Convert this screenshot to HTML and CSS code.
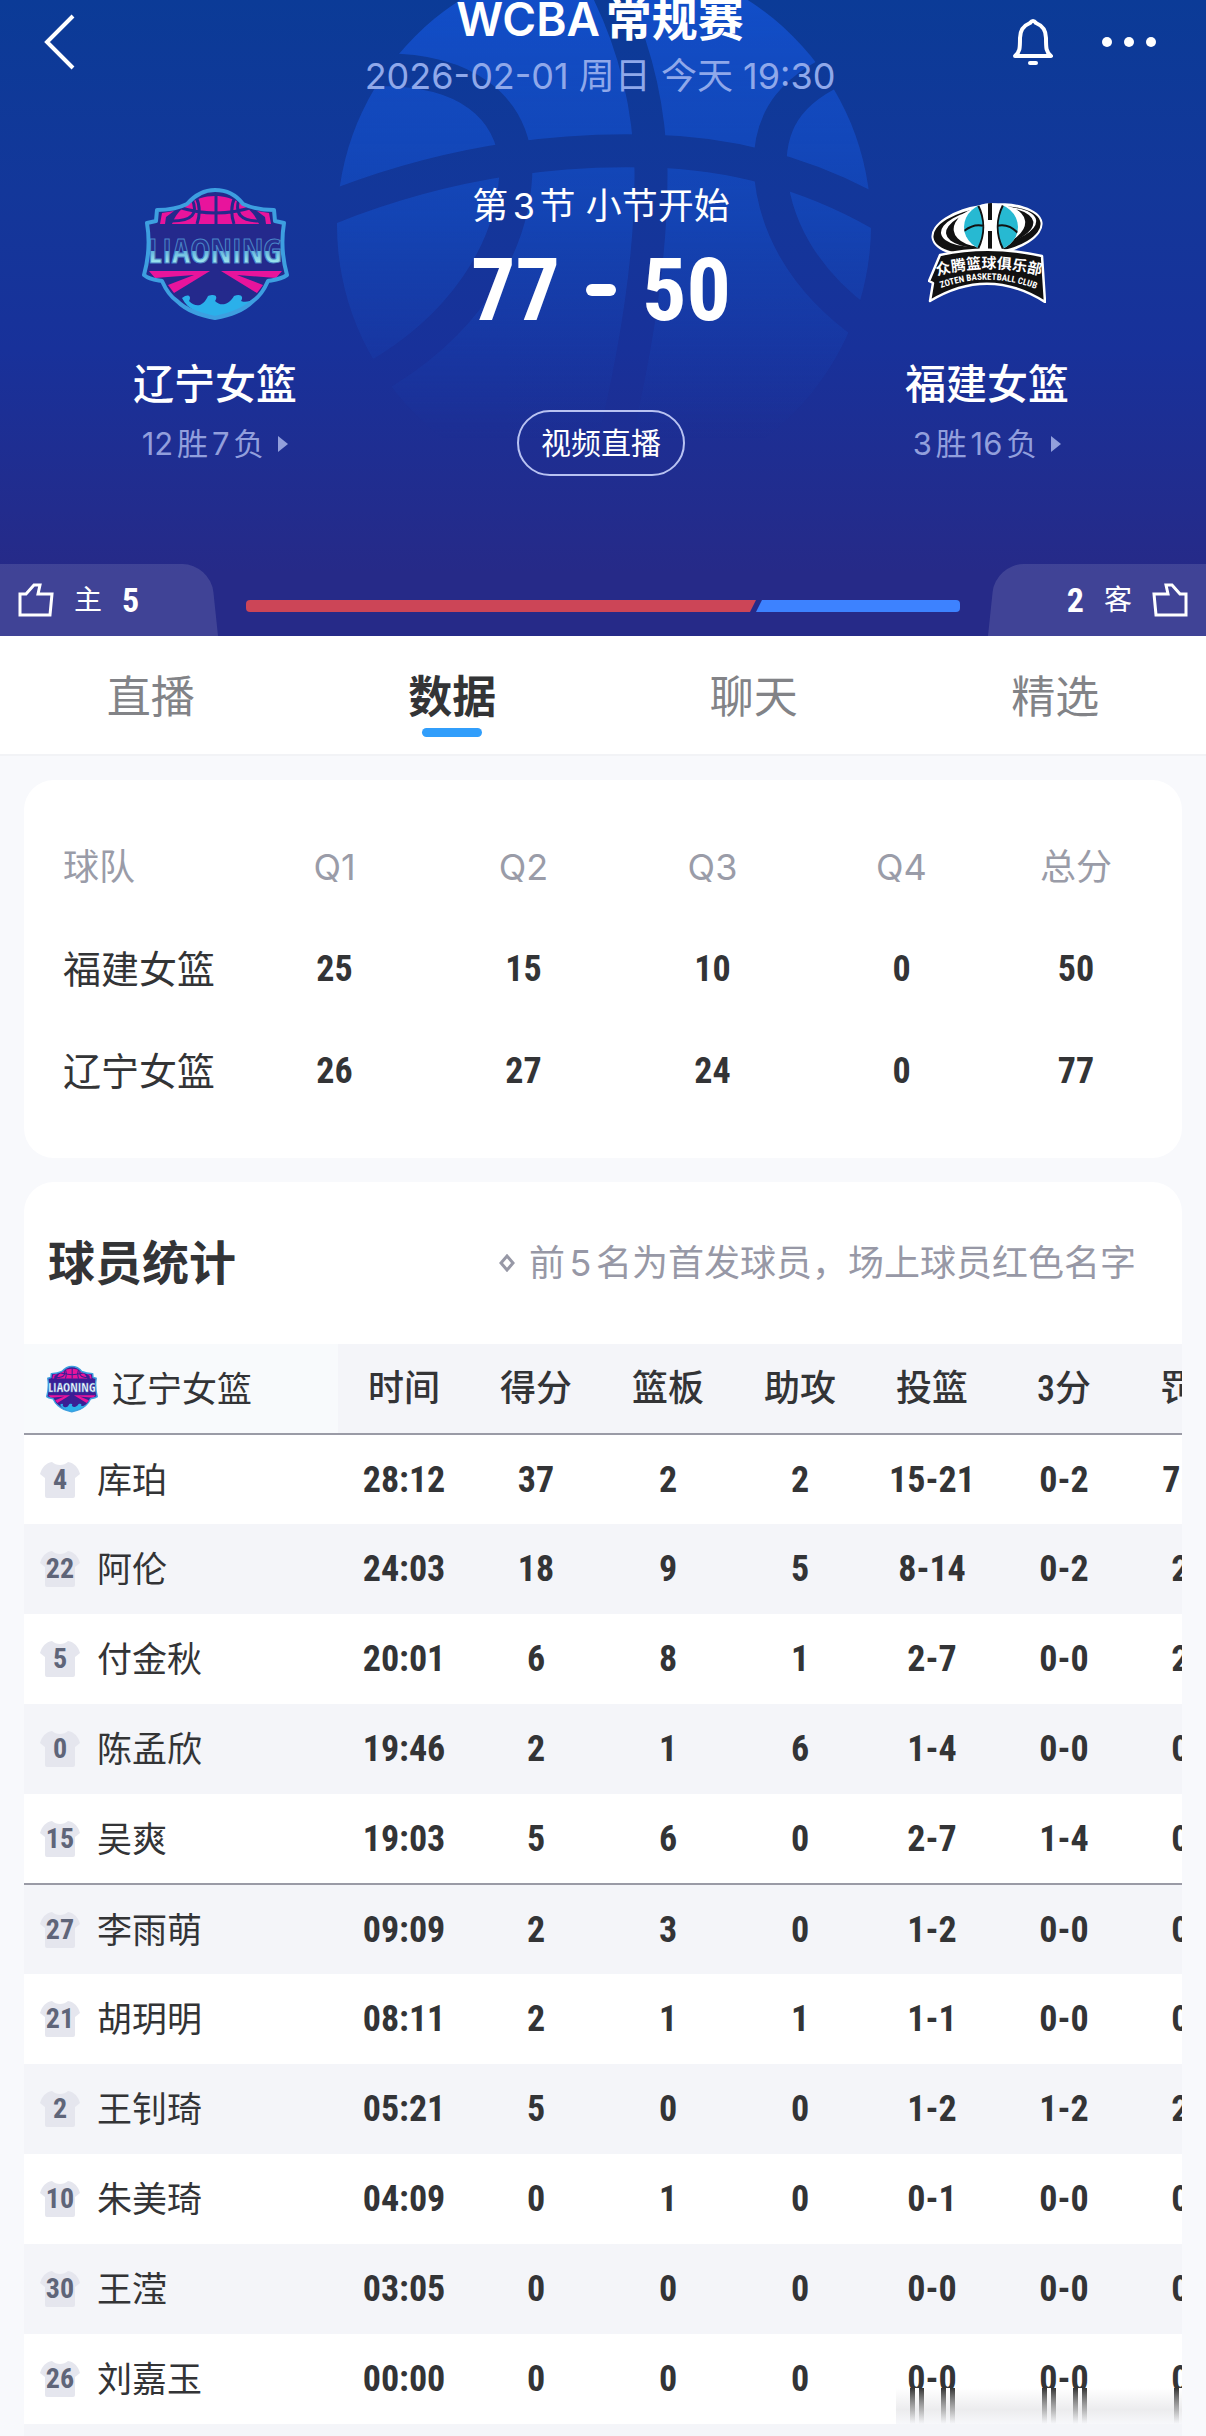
FILE: index.html
```html
<!DOCTYPE html>
<html lang="zh-CN">
<head>
<meta charset="utf-8">
<meta name="viewport" content="width=device-width, initial-scale=1">
<title>WCBA常规赛 辽宁女篮 77-50 福建女篮</title>
<link rel="stylesheet" href="styles.css">
</head>
<body>

<svg class="sprite" aria-hidden="true">
  <linearGradient id="wordHome" x1="0" y1="0" x2="0" y2="1">
    <stop offset="0.52" stop-color="#26308f"/>
    <stop offset="0.52" stop-color="#62b4dd"/>
    <stop offset="0.8" stop-color="#a5ecf0"/>
  </linearGradient>
  <symbol id="badge-liaoning" viewBox="0 0 147 133">
    <path class="badge-body" d="M73 3C85 3 95 9 101 17C112 22 122 23 132 23L133 34L142 36C139 54 140 70 145 88C138 93 131 93 126 94C122 103 117 110 111 114C101 124 88 128 73 131C58 128 45 124 35 114C29 110 24 103 20 94C15 93 8 93 2 88C7 70 8 54 5 36L14 34L15 23C25 23 35 22 45 17C52 9 61 3 73 3Z"/>
    <g fill="#e8149c">
      <path d="M30 37C35 22 52 9 73 9C94 9 111 22 117 37Z"/>
      <path d="M18 37L20 26L32 24L24 30L23 37ZM129 37L127 26L115 24L123 30L124 37Z"/>
      <path d="M7 84H68L32 106L26 98L52 88L13 91Z"/>
      <path d="M140 84H79L115 106L121 98L95 88L134 91Z"/>
    </g>
    <g class="badge-seams" fill="none" stroke-width="3">
      <path d="M74 8V37M36 20Q74 32 111 20M54 10Q60 22 55 37M93 10Q87 22 92 37M50 12Q60 34 30 34M97 12Q90 34 117 34"/>
    </g>
    <text class="badge-word" x="73" y="76" text-anchor="middle">LIAONING</text>
    <path class="badge-tower" d="M74 79L78 84V106H69V84Z"/>
    <path d="M40 111C46 106 50 109 47 114C55 122 62 118 66 109C74 106 76 110 73 114C80 121 88 116 92 109C99 106 102 110 99 114C104 116 108 114 112 112C102 124 88 127 73 131C58 127 46 123 40 111Z" fill="#2bb0ea"/>
    <path d="M73 3C85 3 95 9 101 17C112 22 122 23 132 23L133 34L142 36C139 54 140 70 145 88C138 93 131 93 126 94C122 103 117 110 111 114C101 124 88 128 73 131C58 128 45 124 35 114C29 110 24 103 20 94C15 93 8 93 2 88C7 70 8 54 5 36L14 34L15 23C25 23 35 22 45 17C52 9 61 3 73 3Z" fill="none" stroke="#3d9fe0" stroke-width="4" stroke-linejoin="round"/>
  </symbol>
  <symbol id="jersey" viewBox="0 0 40 36">
    <path d="M12 0C16 4 24 4 28 0C34 1 38 5 40 12L35 16V34Q35 36 33 36H7Q5 36 5 34V16L0 12C2 5 6 1 12 0Z" fill="#e5e6ee"/>
  </symbol>
</svg>

<header class="hero">
  <svg class="hero-ball" viewBox="0 0 534 534" aria-hidden="true">
    <defs>
      <linearGradient id="ballFade" x1="0" y1="0" x2="0" y2="1">
        <stop offset="0" stop-color="#1250cc"/>
        <stop offset="0.5" stop-color="#1448bb" stop-opacity="0.75"/>
        <stop offset="0.9" stop-color="#1a3fae" stop-opacity="0"/>
      </linearGradient>
      <mask id="ballSeams">
        <circle cx="267" cy="267" r="267" fill="#fff"/>
        <g transform="translate(-337 42)" fill="none" stroke="#000" stroke-width="33">
          <path d="M320 212Q480 146 650 151Q780 154 890 220"/>
          <path d="M585 -50Q648 50 651 170Q652 290 610 460"/>
          <path d="M370 70C470 66 512 110 516 165C516 250 460 330 370 380"/>
          <path d="M860 60C790 85 770 120 770 165C772 220 800 280 870 328"/>
        </g>
      </mask>
    </defs>
    <rect width="534" height="534" fill="url(#ballFade)" mask="url(#ballSeams)"/>
  </svg>

  <div class="topbar">
    <button class="icon-button" type="button" aria-label="返回">
      <svg width="32" height="56" viewBox="0 0 32 56"><path d="M29 2L3 28L29 54" fill="none" stroke="#fff" stroke-width="4"/></svg>
    </button>
    <div class="heading">
      <h1 class="league">WCBA常规赛</h1>
      <p class="kickoff">2026-02-01 周日 今天 19:30</p>
    </div>
    <div class="topbar-actions">
      <button class="icon-button" type="button" aria-label="提醒">
        <svg width="42" height="48" viewBox="0 0 42 48" fill="none" stroke="#fff" stroke-width="4" stroke-linecap="round" stroke-linejoin="round"><path d="M3 38C8 34 8 30 8 20C8 11 13 7 18 5Q21 1 24 5C29 7 34 11 34 20C34 30 34 34 39 38Z"/><path d="M18 45H24"/></svg>
      </button>
      <button class="icon-button" type="button" aria-label="更多">
        <svg width="54" height="10" viewBox="0 0 54 10" fill="#fff"><circle cx="5" cy="5" r="5"/><circle cx="27" cy="5" r="5"/><circle cx="49" cy="5" r="5"/></svg>
      </button>
    </div>
  </div>

  <div class="match">
    <div class="team">
      <div class="team-logo">
        <svg class="logo-home" width="147" height="133" role="img" aria-label="辽宁女篮队徽"><use href="#badge-liaoning"/></svg>
      </div>
      <h2 class="team-name">辽宁女篮</h2>
      <a class="team-record" href="#">12胜7负<svg width="10" height="18" viewBox="0 0 10 18"><path d="M0 1L10 9L0 17Z" fill="currentColor"/></svg></a>
    </div>

    <div class="scoreboard">
      <p class="period">第3节 小节开始</p>
      <p class="score"><span>77</span><span class="score-dash"></span><span>50</span></p>
      <button class="watch" type="button">视频直播</button>
    </div>

    <div class="team">
      <div class="team-logo">
        <svg width="118" height="100" viewBox="0 0 118 100" role="img" aria-label="福建女篮队徽">
          <defs>
            <path id="arcTop" d="M4 74Q60 57 118 74"/>
            <path id="arcLow" d="M3 89Q60 64 118 90"/>
            <clipPath id="zotenBall"><ellipse cx="63" cy="24" rx="27" ry="24"/></clipPath>
          </defs>
          <g transform="rotate(-8 60 27)">
            <ellipse cx="59" cy="27" rx="56" ry="26" fill="#fff"/>
            <ellipse cx="59" cy="27" rx="54" ry="23" fill="#111"/>
            <ellipse cx="61" cy="24" rx="48" ry="19" fill="#fff"/>
            <ellipse cx="62" cy="25" rx="44" ry="19" fill="#111"/>
            <ellipse cx="62" cy="23" rx="36" ry="21" fill="#fff"/>
          </g>
          <g clip-path="url(#zotenBall)">
            <rect x="35" y="0" width="56" height="50" fill="#fff"/>
            <path d="M50 2C57 16 57 32 50 46C30 40 30 10 50 2Z" fill="#27b9d2"/>
            <path d="M75 2C68 16 68 32 75 46C96 40 96 10 75 2Z" fill="#27b9d2"/>
            <path d="M50 2C57 16 57 32 50 46M75 2C68 16 68 32 75 46M36 28Q46 20 56 23M69 23Q80 20 90 30" fill="none" stroke="#111" stroke-width="2"/>
            <path d="M60 0H64V17H60ZM60 28H64V50H60Z" fill="#111"/>
          </g>
          <path d="M12 52Q61 41 114 53L117 99Q60 63 2 98L5 80L1 78Z" fill="#111" stroke="#fff" stroke-width="2.5" stroke-linejoin="round"/>
          <text class="zoten-cn"><textPath href="#arcTop" startOffset="50%" text-anchor="middle">众腾篮球俱乐部</textPath></text>
          <text class="zoten-en"><textPath href="#arcLow" startOffset="50%" text-anchor="middle">ZOTEN BASKETBALL CLUB</textPath></text>
        </svg>
      </div>
      <h2 class="team-name">福建女篮</h2>
      <a class="team-record" href="#">3胜16负<svg width="10" height="18" viewBox="0 0 10 18"><path d="M0 1L10 9L0 17Z" fill="currentColor"/></svg></a>
    </div>
  </div>

  <div class="votes">
    <button class="vote vote-home" type="button">
      <svg width="36" height="34" viewBox="0 0 36 34"><path d="M2 11H8L16 2H22L20 11H34L32 32H2Z" fill="none" stroke="#fff" stroke-width="3"/></svg>
      <span>主</span><b>5</b>
    </button>
    <div class="vote-bar"><i class="bar-home" style="flex-grow:5"></i><i class="bar-away" style="flex-grow:2"></i></div>
    <button class="vote vote-away" type="button">
      <b>2</b><span>客</span>
      <svg width="36" height="34" viewBox="0 0 36 34"><path d="M34 11H28L20 2H14L16 11H2L4 32H34Z" fill="none" stroke="#fff" stroke-width="3"/></svg>
    </button>
  </div>
</header>

<nav class="tabs">
  <button class="tab" type="button">直播</button>
  <button class="tab is-active" type="button" aria-current="page">数据</button>
  <button class="tab" type="button">聊天</button>
  <button class="tab" type="button">精选</button>
</nav>

<main class="content">
  <section class="card quarters-card">
    <table class="quarters">
      <thead>
        <tr><th class="q-team">球队</th><th>Q1</th><th>Q2</th><th>Q3</th><th>Q4</th><th class="q-total">总分</th></tr>
      </thead>
      <tbody>
        <tr><th class="q-team">福建女篮</th><td>25</td><td>15</td><td>10</td><td>0</td><td>50</td></tr>
        <tr><th class="q-team">辽宁女篮</th><td>26</td><td>27</td><td>24</td><td>0</td><td>77</td></tr>
      </tbody>
    </table>
  </section>

  <section class="card players-card">
    <div class="card-head">
      <h2 class="card-title">球员统计</h2>
      <p class="card-note"><svg width="16" height="18" viewBox="0 0 16 18"><path d="M8 2L14 9L8 16L2 9Z" fill="none" stroke="currentColor" stroke-width="3"/></svg>前5名为首发球员，场上球员红色名字</p>
    </div>
    <div class="scroller">
      <table class="players">
        <thead>
          <tr>
            <th class="p-name"><span class="cell team-cell"><svg class="logo-small" width="52" height="48" aria-hidden="true"><use href="#badge-liaoning"/></svg>辽宁女篮</span></th>
            <th>时间</th><th>得分</th><th>篮板</th><th>助攻</th><th>投篮</th><th>3分</th><th>罚球</th>
          </tr>
        </thead>
        <tbody class="starters">
          <tr><th class="p-name"><span class="cell"><span class="number"><svg><use href="#jersey"/></svg><b>4</b></span>库珀</span></th><td>28:12</td><td>37</td><td>2</td><td>2</td><td>15-21</td><td>0-2</td><td>7-10</td></tr>
          <tr><th class="p-name"><span class="cell"><span class="number"><svg><use href="#jersey"/></svg><b>22</b></span>阿伦</span></th><td>24:03</td><td>18</td><td>9</td><td>5</td><td>8-14</td><td>0-2</td><td>2-2</td></tr>
          <tr><th class="p-name"><span class="cell"><span class="number"><svg><use href="#jersey"/></svg><b>5</b></span>付金秋</span></th><td>20:01</td><td>6</td><td>8</td><td>1</td><td>2-7</td><td>0-0</td><td>2-2</td></tr>
          <tr><th class="p-name"><span class="cell"><span class="number"><svg><use href="#jersey"/></svg><b>0</b></span>陈孟欣</span></th><td>19:46</td><td>2</td><td>1</td><td>6</td><td>1-4</td><td>0-0</td><td>0-0</td></tr>
          <tr><th class="p-name"><span class="cell"><span class="number"><svg><use href="#jersey"/></svg><b>15</b></span>吴爽</span></th><td>19:03</td><td>5</td><td>6</td><td>0</td><td>2-7</td><td>1-4</td><td>0-0</td></tr>
        </tbody>
        <tbody class="bench">
          <tr><th class="p-name"><span class="cell"><span class="number"><svg><use href="#jersey"/></svg><b>27</b></span>李雨萌</span></th><td>09:09</td><td>2</td><td>3</td><td>0</td><td>1-2</td><td>0-0</td><td>0-0</td></tr>
          <tr><th class="p-name"><span class="cell"><span class="number"><svg><use href="#jersey"/></svg><b>21</b></span>胡玥明</span></th><td>08:11</td><td>2</td><td>1</td><td>1</td><td>1-1</td><td>0-0</td><td>0-0</td></tr>
          <tr><th class="p-name"><span class="cell"><span class="number"><svg><use href="#jersey"/></svg><b>2</b></span>王钊琦</span></th><td>05:21</td><td>5</td><td>0</td><td>0</td><td>1-2</td><td>1-2</td><td>2-2</td></tr>
          <tr><th class="p-name"><span class="cell"><span class="number"><svg><use href="#jersey"/></svg><b>10</b></span>朱美琦</span></th><td>04:09</td><td>0</td><td>1</td><td>0</td><td>0-1</td><td>0-0</td><td>0-0</td></tr>
          <tr><th class="p-name"><span class="cell"><span class="number"><svg><use href="#jersey"/></svg><b>30</b></span>王滢</span></th><td>03:05</td><td>0</td><td>0</td><td>0</td><td>0-0</td><td>0-0</td><td>0-0</td></tr>
          <tr><th class="p-name"><span class="cell"><span class="number"><svg><use href="#jersey"/></svg><b>26</b></span>刘嘉玉</span></th><td>00:00</td><td>0</td><td>0</td><td>0</td><td>0-0</td><td>0-0</td><td>0-0</td></tr>
        </tbody>
      </table>
      <svg class="smear" width="286" height="36" viewBox="0 0 286 36" aria-hidden="true">
        <defs>
          <linearGradient id="haze" x1="0" y1="0" x2="0" y2="1"><stop offset="0" stop-color="#fff"/><stop offset="0.6" stop-color="#ececee"/><stop offset="1" stop-color="#f7f8fb"/></linearGradient>
          <linearGradient id="streak" x1="0" y1="0" x2="0" y2="1"><stop offset="0" stop-color="#333"/><stop offset="1" stop-color="#777" stop-opacity="0"/></linearGradient>
        </defs>
        <rect width="286" height="36" fill="url(#haze)"/>
        <g fill="url(#streak)">
          <rect x="14" width="5" height="36"/><rect x="23" width="5" height="36"/><rect x="45" width="5" height="36"/><rect x="54" width="5" height="36"/>
          <rect x="146" width="5" height="36"/><rect x="155" width="5" height="36"/><rect x="177" width="5" height="36"/><rect x="186" width="5" height="36"/>
          <rect x="278" width="5" height="36"/>
        </g>
      </svg>
    </div>
  </section>
</main>

</body>
</html>
```
FILE: styles.css
```css
:root {
  --text: #333436;
  --muted: #9a9ca8;
  --stripe: #f4f5f9;
  --sans: "Inter", "Noto Sans CJK SC", sans-serif;
  --digits: "Roboto Condensed", "Noto Sans CJK SC", sans-serif;
}

* { box-sizing: border-box; }

body {
  margin: 0;
  background: #f8f9fc;
  color: var(--text);
  font-family: var(--sans);
  font-size: 36px;
  line-height: 44px;
  text-autospace: normal;
}

h1, h2, p { margin: 0; font-weight: 400; }

button {
  padding: 0;
  border: 0;
  background: none;
  color: inherit;
  font: inherit;
}

svg { display: block; flex: none; }

.sprite { position: absolute; width: 0; height: 0; }

/* Match header */
.hero {
  position: relative;
  overflow: hidden;
  background: linear-gradient(#0b3b97, #13379a 30%, #18319a 55%, #262a88 90%);
  color: #fff;
}

.hero-ball {
  position: absolute;
  top: -42px;
  left: 50%;
  width: 534px;
  margin-left: -266px;
}

.topbar {
  position: relative;
  display: grid;
  grid-template-columns: 1fr auto 1fr;
  padding: 0 50px 0 44px;
}

.topbar > .icon-button { justify-self: start; height: 84px; }

.topbar-actions {
  display: flex;
  align-items: center;
  justify-content: flex-end;
  gap: 48px;
  height: 84px;
}

.heading { text-align: center; }

.league { font-size: 46px; font-weight: 600; line-height: 38px; }

.kickoff {
  margin-top: 18px;
  color: #8fa8ea;
  font-size: 36px;
  line-height: 40px;
}

.match {
  position: relative;
  display: grid;
  grid-template-columns: repeat(3, 1fr);
  margin-top: 80px;
  padding: 0 26px 0 22px;
  text-align: center;
}

.team { display: flex; flex-direction: column; align-items: center; }

.team-logo { display: flex; align-items: center; height: 150px; padding-top: 4px; }

.team-name {
  margin-top: 28px;
  font-size: 41px;
  font-weight: 500;
  line-height: 60px;
}

.team-record {
  display: flex;
  align-items: center;
  gap: 14px;
  margin-top: 12px;
  color: #929fdc;
  font-size: 31px;
  line-height: 36px;
  text-decoration: none;
}

.logo-home {
  --badge-fill: #24298c;
  --badge-word: url(#wordHome);
}

.logo-small {
  --badge-fill: #3a1f95;
  --badge-word: #fff;
}

.badge-body { fill: var(--badge-fill); }
.badge-seams { stroke: var(--badge-fill); }
.badge-word {
  fill: var(--badge-word);
  stroke: #4a86c8;
  stroke-width: 1px;
  font: 700 34px "Open Sans Condensed", "Roboto Condensed", sans-serif;
}
.badge-tower { fill: var(--badge-fill); }
.logo-small .badge-tower { fill: #fff; }

.zoten-cn { fill: #fff; font: 700 15px "Noto Sans CJK SC", sans-serif; }
.zoten-en { fill: #fff; font: 700 9px "Roboto Condensed", sans-serif; }

.scoreboard { display: flex; flex-direction: column; align-items: center; }

.period { margin-top: 10px; line-height: 40px; font-size: 36px; }

.score {
  display: flex;
  align-items: center;
  gap: 26px;
  margin-top: 14px;
  font-family: var(--digits);
  font-size: 88px;
  font-weight: 700;
  line-height: 100px;
}

.score-dash { width: 30px; height: 12px; border-radius: 6px; background: #fff; }

.watch {
  width: 168px;
  height: 66px;
  margin-top: 70px;
  border: 2px solid #b8c2f2;
  border-radius: 33px;
  font-size: 30px;
  line-height: 40px;
}

.votes {
  position: relative;
  display: grid;
  grid-template-columns: 218px 1fr 218px;
  margin-top: 88px;
  height: 72px;
}

.vote {
  position: relative;
  display: flex;
  align-items: center;
  gap: 20px;
  padding: 0 18px;
  font-size: 28px;
}

.vote-away { justify-content: flex-end; }

.vote b { font: 700 34px/40px var(--digits); }

.vote > * { position: relative; }

/* Slanted panel behind each vote button */
.vote::before {
  content: "";
  position: absolute;
  inset: 0;
  background: rgba(255, 255, 255, 0.12);
}

.vote-home::before { left: -20px; border-radius: 0 28px 0 0; transform: skewX(6deg); transform-origin: bottom; }
.vote-away::before { right: -20px; border-radius: 28px 0 0 0; transform: skewX(-6deg); transform-origin: bottom; }

.vote-bar {
  display: flex;
  height: 12px;
  margin: 36px 28px 0;
  border-radius: 4px;
  overflow: hidden;
}

.vote-bar i { flex-basis: 0; }
.bar-home { background: #cc4557; clip-path: polygon(0 0, 100% 0, calc(100% - 6px) 100%, 0 100%); }
.bar-away { background: #3d82ff; clip-path: polygon(6px 0, 100% 0, 100% 100%, 0 100%); }

/* Section tabs */
.tabs {
  display: grid;
  grid-template-columns: repeat(4, 1fr);
  height: 120px;
  border-bottom: 2px solid #f2f3f6;
  background: #fff;
}

.tab {
  display: flex;
  flex-direction: column;
  align-items: center;
  padding-top: 30px;
  color: #828387;
  font-size: 44px;
  line-height: 62px;
}

.tab.is-active { color: var(--text); font-weight: 700; }

.tab.is-active::after {
  content: "";
  width: 60px;
  height: 9px;
  border-radius: 5px;
  background: #319efb;
}

/* Cards */
.content {
  display: grid;
  grid-template-columns: minmax(0, 1fr);
  gap: 24px;
  padding: 24px 24px 0;
}

.card { overflow: hidden; border-radius: 30px; background: #fff; }

table { border-collapse: collapse; table-layout: fixed; }

th, td { padding: 0; font-weight: 400; text-align: center; }

td { font-family: var(--digits); font-size: 36px; font-weight: 700; }

.quarters-card { padding: 36px 26px 36px 0; }

.quarters { width: 100%; }

.quarters tr { height: 102px; }

.quarters thead { color: var(--muted); }

.quarters .q-team { width: 216px; padding-left: 39px; text-align: left; }

.quarters tbody .q-team { font-size: 38px; white-space: nowrap; }

.quarters .q-total { width: 160px; }

.players-card { border-radius: 30px 30px 0 0; }

.card-head {
  display: flex;
  align-items: center;
  justify-content: space-between;
  height: 162px;
  padding: 0 46px 0 24px;
}

.card-title { font-size: 47px; font-weight: 700; }

.card-note {
  display: flex;
  align-items: center;
  gap: 14px;
  color: #9798a6;
}

.scroller {
  position: relative;
  overflow: hidden;
  padding-bottom: 12px;
  background: var(--stripe);
}

.players { width: 1238px; }

.players th, .players td { width: 132px; height: 90px; }

.players .p-name { width: 314px; font-size: 35px; }

.players thead { background: var(--stripe); border-bottom: 2px solid #9a9ba6; }

.players thead th { font-family: var(--digits); font-weight: 500; text-autospace: no-autospace; }

.players thead .p-name { background: #f8fafc; font-family: var(--sans); font-weight: 400; }

.players tbody { background: #fff; }

.starters { border-bottom: 2px solid #9a9ba6; }

.starters tr:nth-child(even), .bench tr:nth-child(odd) { background: var(--stripe); }

.cell { display: flex; align-items: center; gap: 17px; padding-left: 16px; }

.team-cell { gap: 14px; padding-left: 22px; }

.number {
  display: grid;
  place-items: center;
  width: 40px;
  height: 36px;
}

.number > * { grid-area: 1 / 1; }

.number svg { width: 40px; height: 36px; }

.number b { color: #5f6579; font: 700 28px/36px var(--digits); }

.smear { position: absolute; right: 0; bottom: 12px; }
```
